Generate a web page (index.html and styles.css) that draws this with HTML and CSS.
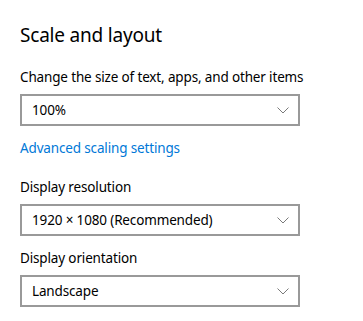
FILE: index.html
```html
<!DOCTYPE html>
<html>
<head>
<meta charset="utf-8">
<link rel="stylesheet" href="styles.css">
</head>
<body>
<div class="page">
  <h1 class="title">Scale and layout</h1>
  <div class="label label-first">Change the size of text, apps, and other items</div>
  <div class="select"><span class="value">100%</span><svg class="chev" width="12" height="7" viewBox="0 0 12 7"><path d="M0.5 0.5 L6 6 L11.5 0.5" fill="none" stroke="#7a7a7a" stroke-width="1"/></svg></div>
  <a class="link">Advanced scaling settings</a>
  <div class="label label-sec">Display resolution</div>
  <div class="select"><span class="value">1920 × 1080 (Recommended)</span><svg class="chev" width="12" height="7" viewBox="0 0 12 7"><path d="M0.5 0.5 L6 6 L11.5 0.5" fill="none" stroke="#7a7a7a" stroke-width="1"/></svg></div>
  <div class="label label-third">Display orientation</div>
  <div class="select"><span class="value">Landscape</span><svg class="chev" width="12" height="7" viewBox="0 0 12 7"><path d="M0.5 0.5 L6 6 L11.5 0.5" fill="none" stroke="#7a7a7a" stroke-width="1"/></svg></div>
</div>
</body>
</html>
```
FILE: styles.css
```css
html, body {
  margin: 0;
  padding: 0;
  background: #ffffff;
}
body {
  font-family: "Noto Sans", "Open Sans", sans-serif;
  color: #000000;
}
.page {
  padding: 21px 0 0 20px;
  display: flex;
  flex-direction: column;
  align-items: flex-start;
}
.title {
  margin: 0;
  font-size: 19px;
  font-weight: 400;
  line-height: 28px;
  letter-spacing: -0.2px;
}
.label {
  font-size: 13.5px;
  line-height: 20px;
  letter-spacing: -0.15px;
  margin-bottom: 7px;
}
.label-first { margin-top: 18px; }
.label-sec { margin-top: 19px; }
.label-third { margin-top: 12px; }
.select {
  box-sizing: border-box;
  width: 280px;
  height: 32px;
  border: 2px solid #999999;
  display: flex;
  align-items: center;
  justify-content: space-between;
  padding: 0 9px 0 10px;
  font-size: 13.5px;
  line-height: 20px;
  letter-spacing: -0.15px;
}
.chev {
  display: block;
}
.link {
  color: #0078d7;
  font-size: 13.5px;
  line-height: 20px;
  letter-spacing: -0.15px;
  margin-top: 12px;
  text-decoration: none;
}
```
